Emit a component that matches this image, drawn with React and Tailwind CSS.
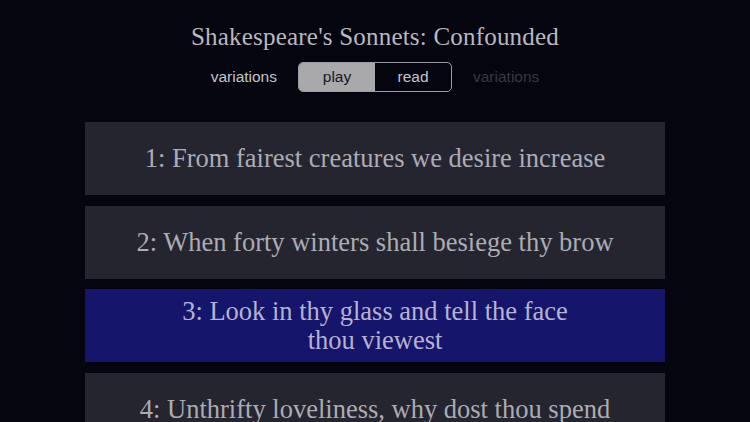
import React from 'react';

const sonnets = [
  { lines: ['1: From fairest creatures we desire increase'] },
  { lines: ['2: When forty winters shall besiege thy brow'] },
  { lines: ['3: Look in thy glass and tell the face', 'thou viewest'], active: true },
  { lines: ['4: Unthrifty loveliness, why dost thou spend'] },
];

const serif = { fontFamily: '"Liberation Serif", "DejaVu Serif", serif' };

export default function App() {
  return (
    <div className="w-[750px] h-[422px] overflow-hidden bg-[#05050f] flex flex-col items-center">
      <h1 className="mt-[22px] text-[25px] leading-[30px] text-[#b9b8c0] tracking-[0.2px]" style={serif}>
        Shakespeare's Sonnets: Confounded
      </h1>

      <div className="mt-[10px] flex items-center gap-[21px] font-['Liberation_Sans',sans-serif] text-[15.5px]">
        <span className="text-[#c4c4ca]">variations</span>
        <div className="flex h-[30px] w-[154px] rounded-[5px] border border-[#9c9ca4] overflow-hidden">
          <div className="flex-1 bg-[#a9a9ab] text-[#17171f] flex items-center justify-center">play</div>
          <div className="flex-1 text-[#c4c4cc] flex items-center justify-center">read</div>
        </div>
        <span className="text-[#383843]">variations</span>
      </div>

      <div className="mt-[30px] w-[580px] flex flex-col gap-[10.5px]">
        {sonnets.map((s, i) => (
          <div
            key={i}
            className={`h-[73px] shrink-0 flex flex-col items-center justify-center text-[26.5px] leading-[29px] ${
              s.active ? 'bg-[#15156b] text-[#b6b3cf]' : 'bg-[#25252f] text-[#acacb4]'
            }`}
            style={serif}
          >
            {s.lines.map((l) => (
              <span key={l}>{l}</span>
            ))}
          </div>
        ))}
      </div>
    </div>
  );
}
